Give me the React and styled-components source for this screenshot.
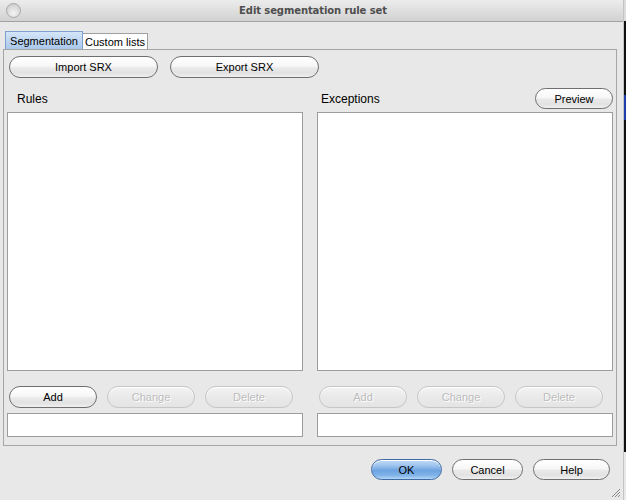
import React from "react";
import styled, { createGlobalStyle, css } from "styled-components";

const Global = createGlobalStyle`
  html, body { margin: 0; padding: 0; background: #e8e8e8; overflow: hidden; }
  body { font-family: "Liberation Sans", Arial, sans-serif; }
  * { box-sizing: border-box; }
`;

const Screen = styled.div`
  display: flex;
  width: 100vw;
  height: 500px;
  overflow: hidden;
`;

const Window = styled.div`
  position: relative;
  flex: 1;
  min-width: 0;
  display: flex;
  flex-direction: column;
  background: #e8e8e8;
  border-right: 1px solid #c4c4c4;
`;

const Edge = styled.div`
  flex: none;
  width: 2px;
  align-self: stretch;
  background-color: #111;
  background-image: linear-gradient(
    to bottom,
    #dcdcdc 0px,
    #dcdcdc 21px,
    #111 21px,
    #111 95px,
    #1c3fa8 95px,
    #1c3fa8 120px,
    #111 120px,
    #111 452px,
    #e8e8e8 452px
  );
`;

const TitleBar = styled.div`
  height: 22px;
  flex: none;
  display: flex;
  align-items: center;
  justify-content: center;
  position: relative;
  background: linear-gradient(to bottom, #ececec, #d2d2d2);
  border-bottom: 1px solid #a2a2a2;
`;

const CloseDot = styled.span`
  position: absolute;
  left: 6px;
  top: 3px;
  width: 15px;
  height: 15px;
  border-radius: 50%;
  border: 1px solid #a8a8a8;
  background: radial-gradient(circle at 50% 70%, #f4f4f4 0%, #d9d9d9 60%, #c4c4c4 100%);
`;

const Title = styled.span`
  font-family: "DejaVu Sans", sans-serif;
  font-weight: bold;
  font-size: 10px;
  color: #4e4e4e;
  letter-spacing: -0.1px;
  margin-left: 3px;
`;

const Body = styled.div`
  flex: 1;
  display: flex;
  flex-direction: column;
  padding: 9px 5px 0 3px;
`;

const TabStrip = styled.div`
  display: flex;
  align-items: flex-end;
  margin-left: 2px;
  height: 18px;
`;

const Tab = styled.div`
  font-size: 11px;
  color: #000;
  white-space: nowrap;
  border: 1px solid #a0a0a0;
  border-bottom: none;
  display: flex;
  align-items: center;
  justify-content: center;
  ${(p) =>
    p.$active
      ? css`
          height: 18px;
          background: linear-gradient(to bottom, #d4e5f8, #a9c7ec);
          border-color: #7fa0cc;
          width: 78px;
        `
      : css`
          height: 16px;
          background: #fff;
          border-left: none;
          width: 65px;
        `}
`;

const Panel = styled.div`
  border: 1px solid #a6a6a6;
  width: 614px;
  height: 397px;
  padding: 6px 3px 0 3px;
  display: flex;
  flex-direction: column;
`;

const TopRow = styled.div`
  display: flex;
  gap: 12px;
  margin-left: 2px;
`;

const PillButton = styled.button`
  font-family: "Liberation Sans", Arial, sans-serif;
  font-size: 11px;
  width: ${(p) => p.$w || 88}px;
  height: ${(p) => p.$h || 22}px;
  border-radius: 11px;
  padding: 0;
  margin: 0;
  color: #000;
  border: 1px solid #6f6f6f;
  background: linear-gradient(
    to bottom,
    #ffffff 0%,
    #f7f7f7 45%,
    #e9e9e9 55%,
    #e2e2e2 80%,
    #f0f0f0 100%
  );
  box-shadow: inset 0 1px 0 #fff;
  display: flex;
  align-items: center;
  justify-content: center;
  ${(p) =>
    p.disabled &&
    css`
      color: #bcbcbc;
      border-color: #c6c6c6;
      text-shadow: 1px 1px 0 #fff;
      background: linear-gradient(to bottom, #f3f3f3, #e9e9e9 55%, #e4e4e4);
    `}
  ${(p) =>
    p.$primary &&
    css`
      border-color: #3f6aa3;
      background: linear-gradient(
        to bottom,
        #c4ddf6 0%,
        #9cc3ee 30%,
        #6ea3e0 55%,
        #7fb2e8 80%,
        #b4d6f6 100%
      );
    `}
`;

const Columns = styled.div`
  display: grid;
  grid-template-columns: 296px 296px;
  column-gap: 14px;
  margin-top: 10px;
`;

const Column = styled.div`
  display: flex;
  flex-direction: column;
`;

const Header = styled.div`
  height: 21px;
  display: flex;
  align-items: center;
  justify-content: space-between;
  padding-left: ${(p) => p.$indent}px;
  margin-bottom: 3px;
`;

const Label = styled.span`
  font-size: 12px;
  color: #000;
`;

const ListBox = styled.div`
  height: 259px;
  background: #fff;
  border: 1px solid #9c9c9c;
`;

const ButtonRow = styled.div`
  display: flex;
  gap: 10px;
  margin: 15px 0 0 2px;
`;

const TextField = styled.div`
  height: 24px;
  margin-top: 5px;
  background: #fff;
  border: 1px solid #9c9c9c;
`;

const Footer = styled.div`
  display: flex;
  justify-content: flex-start;
  gap: 10px;
  margin-top: 13px;
  padding-left: 368px;
`;

const Grip = styled.svg`
  position: absolute;
  right: 2px;
  bottom: 2px;
`;

function ListColumn({ label, indent, preview, addEnabled }) {
  return (
    <Column>
      <Header $indent={indent}>
        <Label>{label}</Label>
        {preview && (
          <PillButton $w={78} $h={21}>
            Preview
          </PillButton>
        )}
      </Header>
      <ListBox />
      <ButtonRow>
        <PillButton disabled={!addEnabled}>Add</PillButton>
        <PillButton disabled>Change</PillButton>
        <PillButton disabled>Delete</PillButton>
      </ButtonRow>
      <TextField />
    </Column>
  );
}

export default function App() {
  return (
    <>
      <Global />
      <Screen>
        <Window>
          <TitleBar>
            <CloseDot />
            <Title>Edit segmentation rule set</Title>
          </TitleBar>
          <Body>
            <TabStrip>
              <Tab $active>Segmentation</Tab>
              <Tab>Custom lists</Tab>
            </TabStrip>
            <Panel>
              <TopRow>
                <PillButton $w={149}>Import SRX</PillButton>
                <PillButton $w={149}>Export SRX</PillButton>
              </TopRow>
              <Columns>
                <ListColumn label="Rules" indent={10} addEnabled />
                <ListColumn label="Exceptions" indent={4} preview />
              </Columns>
            </Panel>
            <Footer>
              <PillButton $primary $w={71} $h={21}>
                OK
              </PillButton>
              <PillButton $w={71} $h={21}>
                Cancel
              </PillButton>
              <PillButton $w={77} $h={21}>
                Help
              </PillButton>
            </Footer>
          </Body>
          <Grip width="10" height="10" viewBox="0 0 10 10">
            <path d="M9 1 L1 9 M9 4 L4 9 M9 7 L7 9" stroke="#8a8a8a" strokeWidth="1" />
          </Grip>
        </Window>
        <Edge />
      </Screen>
    </>
  );
}
